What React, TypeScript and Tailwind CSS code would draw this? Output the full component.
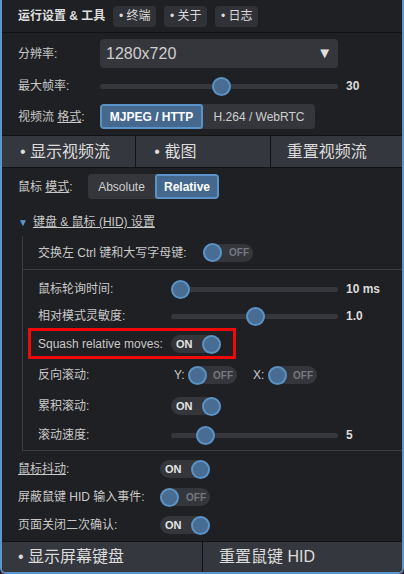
import React from 'react';

const font = "font-['Liberation_Sans','Noto_Sans_CJK_SC',sans-serif]";

function Toggle({ on, w = 'w-[50px]' }: { on: boolean; w?: string }) {
  return (
    <div
      className={`flex h-[18px] shrink-0 ${w} items-center justify-between rounded-full bg-[#34363c] ${
        on ? 'pl-[5px]' : 'pr-[4px]'
      }`}
    >
      {on ? (
        <>
          <span className="text-[11px] font-bold text-[#e4e4e4]">ON</span>
          <Knob />
        </>
      ) : (
        <>
          <Knob />
          <span className="text-[10px] font-bold text-[#76787e]">OFF</span>
        </>
      )}
    </div>
  );
}

function Knob() {
  return <span className="h-[19px] w-[19px] shrink-0 rounded-full border-2 border-[#5a93c6] bg-[#486c92]" />;
}

function Slider({ pos, width }: { pos: number; width: string }) {
  return (
    <div className={`relative flex h-[20px] shrink-0 ${width} items-center`}>
      <div className="h-[5px] w-full rounded-full bg-[#35373d]" />
      <span
        className="absolute top-[1px] h-[19px] w-[19px] rounded-full border-2 border-[#5a93c6] bg-[#486c92]"
        style={{ left: pos }}
      />
    </div>
  );
}

function Seg({ items, active, widths }: { items: string[]; active: number; widths: string[] }) {
  return (
    <div className="flex h-[25px] shrink-0 overflow-hidden rounded-[4px] bg-[#34363c]">
      {items.map((t, i) => (
        <div
          key={t}
          className={`flex items-center justify-center whitespace-nowrap text-[12px] ${widths[i]} ${
            i === active
              ? 'rounded-[3px] border-2 border-[#5b93c8] bg-[#44688e] font-bold text-white'
              : 'text-[#cfcfcf]'
          }`}
        >
          {t}
        </div>
      ))}
    </div>
  );
}

function Label({ w, children }: { w: string; children: React.ReactNode }) {
  return <span className={`${w} shrink-0 whitespace-nowrap`}>{children}</span>;
}

export default function App() {
  return (
    <div className={`h-[574px] w-[404px] bg-[#3a1d1d] ${font}`}>
      <div className="flex h-full flex-col overflow-hidden rounded-b-[6px] border-x-2 border-b-2 border-[#5b97cf] bg-[#1f2023] text-[#c9c9c9]">
        {/* header */}
        <div className="flex h-[33px] shrink-0 items-center gap-[8px] border-b border-[#111214] pl-[16px]">
          <span className="whitespace-nowrap text-[12px] font-bold text-[#dedede]">运行设置 &amp; 工具</span>
          {['终端', '关于', '日志'].map((t) => (
            <span key={t} className="flex h-[21px] w-[43px] items-center justify-center rounded-[4px] bg-[#303238] text-[12px] text-[#dcdcdc]">
              • {t}
            </span>
          ))}
        </div>

        {/* video settings */}
        <div className="pl-[16px] text-[12px]">
          <div className="mt-[6px] flex h-[29px] items-center">
            <Label w="w-[82px]">分辨率:</Label>
            <div className="flex h-[29px] w-[238px] items-center justify-between rounded-[4px] bg-[#34363c] pl-[6px] pr-[6px]">
              <span className="text-[16px] text-[#cfcfcf]">1280x720</span>
              <span className="text-[15px] text-[#e0e0e0]">▼</span>
            </div>
          </div>
          <div className="mt-[4px] flex h-[28px] items-center">
            <Label w="w-[82px]">最大帧率:</Label>
            <Slider pos={112} width="w-[238px]" />
            <span className="ml-[8px] font-bold text-[#dcdcdc]">30</span>
          </div>
          <div className="mt-[4px] flex h-[25px] items-center">
            <Label w="w-[82px]">
              视频流 <span className="underline">格式</span>:
            </Label>
            <Seg items={['MJPEG / HTTP', 'H.264 / WebRTC']} active={0} widths={['w-[103px]', 'w-[112px]']} />
          </div>
        </div>

        {/* video buttons */}
        <div className="mt-[6px] flex h-[33px] shrink-0 border-y border-[#111214] bg-[#35373e] text-[16px] text-[#dcdcdc]">
          <div className="flex flex-1 items-center border-r border-[#111214] pl-[18px]">• 显示视频流</div>
          <div className="flex flex-1 items-center border-r border-[#111214] pl-[18px]">• 截图</div>
          <div className="flex flex-1 items-center pl-[16px]">重置视频流</div>
        </div>

        {/* mouse */}
        <div className="pl-[16px] text-[12px]">
          <div className="mt-[6px] flex h-[25px] items-center">
            <Label w="w-[70px]">
              鼠标 <span className="underline">模式</span>:
            </Label>
            <Seg items={['Absolute', 'Relative']} active={1} widths={['w-[67px]', 'w-[64px]']} />
          </div>
          <div className="mt-[13px] flex h-[20px] items-center gap-[5px]">
            <span className="text-[10px] text-[#5b97cf]">▼</span>
            <span className="underline">键盘 &amp; 鼠标 (HID) 设置</span>
          </div>

          {/* nested */}
          <div className="ml-[4px] mt-[4px] border-b border-l border-[#3a3c42]">
            <div className="flex h-[34px] items-center border-b border-[#3a3c42] pl-[15px]">
              <Label w="w-[165px]">交换左 Ctrl 键和大写字母键:</Label>
              <Toggle on={false} />
            </div>
            <div className="pl-[15px]">
              <div className="mt-[9px] flex h-[20px] items-center">
                <Label w="w-[133px]">鼠标轮询时间:</Label>
                <Slider pos={0} width="w-[167px]" />
                <span className="ml-[8px] font-bold text-[#dcdcdc]">10 ms</span>
              </div>
              <div className="mt-[7px] flex h-[20px] items-center">
                <Label w="w-[133px]">相对模式灵敏度:</Label>
                <Slider pos={75} width="w-[167px]" />
                <span className="ml-[8px] font-bold text-[#dcdcdc]">1.0</span>
              </div>
              <div className="relative mt-[8px] flex h-[20px] items-center">
                <Label w="w-[133px]">Squash relative moves:</Label>
                <Toggle on />
                <span className="absolute left-[-10px] top-[-6px] h-[31px] w-[208px] border-[3px] border-[#f00a0a]" />
              </div>
              <div className="mt-[11px] flex h-[20px] items-center">
                <Label w="w-[136px]">反向滚动:</Label>
                <Label w="w-[14px]">Y:</Label>
                <Toggle on={false} w="w-[49px]" />
                <Label w="ml-[16px] w-[15px]">X:</Label>
                <Toggle on={false} w="w-[49px]" />
              </div>
              <div className="mt-[11px] flex h-[20px] items-center">
                <Label w="w-[133px]">累积滚动:</Label>
                <Toggle on />
              </div>
              <div className="mb-[5px] mt-[9px] flex h-[20px] items-center">
                <Label w="w-[133px]">滚动速度:</Label>
                <Slider pos={25} width="w-[167px]" />
                <span className="ml-[8px] font-bold text-[#dcdcdc]">5</span>
              </div>
            </div>
          </div>

          <div className="mt-[8px] flex h-[20px] items-center">
            <Label w="w-[142px]">
              <span className="underline">鼠标抖动</span>:
            </Label>
            <Toggle on />
          </div>
          <div className="mt-[8px] flex h-[20px] items-center">
            <Label w="w-[142px]">屏蔽鼠键 HID 输入事件:</Label>
            <Toggle on={false} />
          </div>
          <div className="mt-[8px] flex h-[20px] items-center">
            <Label w="w-[142px]">页面关闭二次确认:</Label>
            <Toggle on />
          </div>
        </div>

        <div className="mt-auto flex h-[31px] shrink-0 border-t border-[#111214] bg-[#35373e] text-[16px] text-[#dcdcdc]">
          <div className="flex w-[201px] items-center border-r border-[#111214] pl-[16px]">• 显示屏幕键盘</div>
          <div className="flex flex-1 items-center pl-[16px]">重置鼠键 HID</div>
        </div>
      </div>
    </div>
  );
}
